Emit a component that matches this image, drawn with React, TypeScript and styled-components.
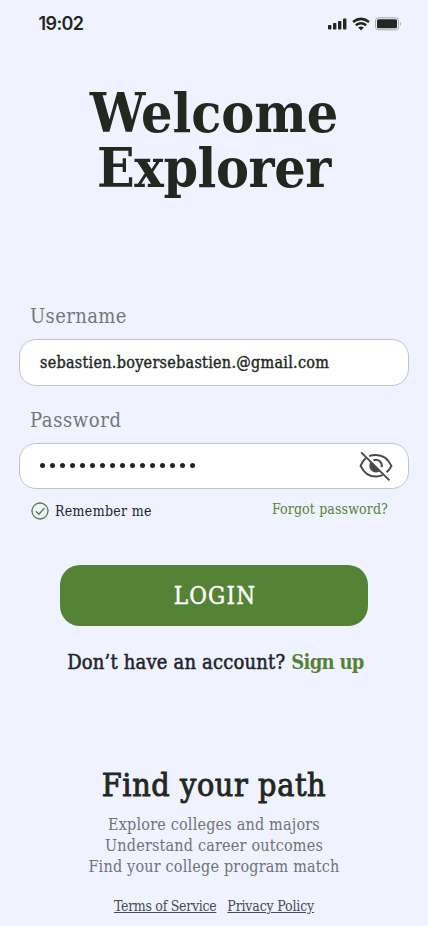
import React from 'react';
import styled, { createGlobalStyle } from 'styled-components';

const Global = createGlobalStyle`
  * { box-sizing: border-box; }
  body { margin: 0; background: #f0f3ff; }
  button, h1, h2, p { margin: 0; padding: 0; border: 0; font: inherit; }
`;

const Screen = styled.main`
  width: 428px;
  height: 926px;
  overflow: hidden;
  display: flex;
  flex-direction: column;
  background: #f0f3ff;
  color: #23281f;
  font-family: 'DejaVu Serif Condensed', 'DejaVu Serif', serif;
  font-stretch: 90%;
`;

const StatusBar = styled.header`
  height: 47px;
  flex: none;
  display: flex;
  align-items: center;
  justify-content: space-between;
  padding: 0 25px 0 38.5px;
`;

const Clock = styled.span`
  font: 600 18px/22px Inter, sans-serif;
  letter-spacing: -0.6px;
`;

const StatusIcons = styled.svg`
  display: block;
`;

const Title = styled.h1`
  margin-top: 38px;
  text-align: center;
  font-weight: 700;
  font-size: 55px;
  line-height: 55px;
  white-space: nowrap;
`;

const TitleLine = styled.span<{ $tracking?: number }>`
  display: block;
  letter-spacing: ${(p) => p.$tracking ?? 0}px;
`;

const Form = styled.section`
  margin-top: 107px;
  padding: 0 19px;
`;

const Label = styled.label<{ $spaced?: boolean }>`
  display: block;
  height: 28px;
  margin: ${(p) => (p.$spaced ? '20px' : '0')} 0 9px 11px;
  font-size: 20px;
  line-height: 28px;
  letter-spacing: ${(p) => (p.$spaced ? 0.6 : 0.4)}px;
  color: #73757d;
`;

const Field = styled.div<{ $height: number }>`
  height: ${(p) => p.$height}px;
  display: flex;
  align-items: center;
  justify-content: space-between;
  padding: 0 15px 1px 20px;
  background: #fff;
  border: 1px solid #c2c3cc;
  border-radius: 17px;
  font-size: 16px;
  letter-spacing: 0.29px;
  -webkit-text-stroke: 0.4px currentColor;
`;

const Dots = styled.div`
  display: flex;
  gap: 5px;
`;

const Dot = styled.i`
  width: 5px;
  height: 5px;
  border-radius: 50%;
  background: #222;
`;

const Options = styled.div`
  display: flex;
  justify-content: space-between;
  padding: 12px 21px 0 12px;
  font-size: 14px;
  line-height: 20px;
`;

const Remember = styled.span`
  display: flex;
  align-items: center;
  gap: 6px;
  letter-spacing: 0.33px;
  color: #20242e;
`;

const Forgot = styled.a`
  margin-top: -2px;
  letter-spacing: 0.13px;
  color: #558335;
`;

const Login = styled.button`
  flex: none;
  width: 308px;
  height: 61px;
  margin: 44px 0 0 60px;
  padding-left: 2px;
  border-radius: 20px;
  background: #558335;
  color: #fff;
  font-size: 24px;
  letter-spacing: 1.2px;
  -webkit-text-stroke: 0.4px currentColor;
`;

const Signup = styled.p`
  margin-top: 22px;
  padding-left: 3px;
  text-align: center;
  font-size: 20px;
  line-height: 28px;
  letter-spacing: 0.18px;
  white-space: nowrap;
  color: #20242a;
  -webkit-text-stroke: 0.5px currentColor;
  b {
    color: #558335;
    font-weight: 700;
    letter-spacing: -0.7px;
    -webkit-text-stroke: 0;
  }
`;

const Tagline = styled.h2`
  margin-top: 88px;
  text-align: center;
  font-size: 32px;
  line-height: 42px;
  letter-spacing: 0.6px;
  white-space: nowrap;
  -webkit-text-stroke: 0.9px currentColor;
`;

const Benefits = styled.p`
  margin-top: 8px;
  text-align: center;
  font-size: 16px;
  line-height: 21px;
  letter-spacing: 0.2px;
  white-space: nowrap;
  color: #6f727a;
`;

const Links = styled.footer`
  display: flex;
  justify-content: center;
  gap: 11px;
  margin-top: 19px;
  font-size: 14px;
  line-height: 20px;
  letter-spacing: -0.3px;
  white-space: nowrap;
  color: #454a56;
  a { text-decoration: underline; }
  a + a { letter-spacing: -0.17px; }
`;

const StatusGlyphs = () => (
  <StatusIcons width="76" height="16" viewBox="0 0 76 16" fill="#222722">
    <rect x="1" y="9" width="3.4" height="4.6" rx="0.8" />
    <rect x="6" y="7" width="3.4" height="6.6" rx="0.8" />
    <rect x="11" y="5" width="3.4" height="8.6" rx="0.8" />
    <rect x="16" y="2.6" width="3.4" height="11" rx="0.8" />
    <g fill="none" stroke="#222722" strokeWidth="2.5">
      <path d="M26 5.9q8-6 16 0" />
      <path d="M28.8 9.3q5.2-4 10.4 0" />
    </g>
    <path d="M31.2 11.6q2.8-2 5.6 0L34 14.6z" />
    <rect x="48.5" y="1.8" width="23" height="12" rx="3" fill="none" stroke="#a4a8aa" />
    <rect x="50" y="3.3" width="20" height="9" rx="1.5" />
    <path d="M73 5.8q2 2 0 4z" fill="#a4a8aa" />
  </StatusIcons>
);

const CheckCircle = () => (
  <svg width="18" height="18" viewBox="0 0 18 18" fill="none" stroke="#558335" strokeWidth="1.3">
    <circle cx="9" cy="9" r="8" />
    <path d="M4.8 9.2l3 3 5.6-6" />
  </svg>
);

const HiddenEye = () => (
  <svg width="34" height="32" viewBox="0 0 34 32" fill="none" stroke="#494949" strokeWidth="2">
    <path d="M10.2 6.1C12.2 5.3 14.5 4.9 17 4.9c6.6 0 12.2 4 15.4 10.9-1.2 2.6-2.8 4.8-4.8 6.5" />
    <path d="M6.7 8.3C4.6 10.1 2.9 12.5 1.6 15.8 4.8 22.7 10.4 26.6 17 26.6c2.4 0 4.6-.5 6.6-1.4" />
    <path d="M14.4 10.3c4.5-2 9.1 1.6 8.3 6.8" />
    <path d="M11.3 12C8.6 17 12 22.3 17 22.4c1.8 0 3.2-.5 4.4-1.3z" fill="#494949" stroke="none" />
    <path d="M2.2 2.4l28.2 28" />
  </svg>
);

export default function App() {
  return (
    <Screen>
      <Global />
      <StatusBar>
        <Clock>19:02</Clock>
        <StatusGlyphs />
      </StatusBar>
      <Title>
        <TitleLine>Welcome</TitleLine>
        <TitleLine $tracking={-0.4}>Explorer</TitleLine>
      </Title>
      <Form>
        <Label>Username</Label>
        <Field $height={47}>sebastien.boyersebastien.@gmail.com</Field>
        <Label $spaced>Password</Label>
        <Field $height={46}>
          <Dots>{Array.from({ length: 16 }, (_, i) => <Dot key={i} />)}</Dots>
          <HiddenEye />
        </Field>
        <Options>
          <Remember><CheckCircle />Remember me</Remember>
          <Forgot>Forgot password?</Forgot>
        </Options>
      </Form>
      <Login>LOGIN</Login>
      <Signup>Don’t have an account? <b>Sign up</b></Signup>
      <Tagline>Find your path</Tagline>
      <Benefits>
        Explore colleges and majors<br />
        Understand career outcomes<br />
        Find your college program match
      </Benefits>
      <Links><a>Terms of Service</a><a>Privacy Policy</a></Links>
    </Screen>
  );
}
